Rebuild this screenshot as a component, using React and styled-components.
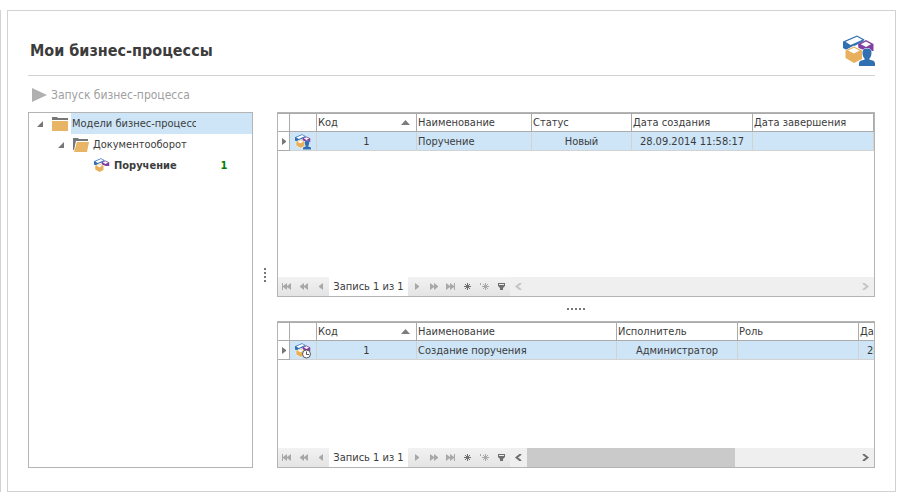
import { useState } from "react";
import styled, { createGlobalStyle } from "styled-components";

const GlobalStyle = createGlobalStyle`
  * {
    box-sizing: border-box;
  }
  body {
    margin: 0;
    background-color: #fff;
    color: #3c3c3c;
    font-family: "DejaVu Sans Condensed", "DejaVu Sans", sans-serif;
    font-size: 11px;
    line-height: 17px;
  }
  button {
    margin: 0;
    padding: 0;
    border: none;
    background: none;
    color: inherit;
    font: inherit;
    cursor: pointer;
  }
  svg {
    display: block;
  }
`;

const StyledPage = styled.div`
  display: flex;
  gap: 6px;
  min-height: 100vh;
  padding: 10px 10px 10px 0;
`;

const StyledEdge = styled.div`
  width: 1px;
  background-color: #d2d2d2;
`;

const StyledPanel = styled.main`
  display: flex;
  flex: 1;
  flex-direction: column;
  min-width: 0;
  padding: 0 20px 23px;
  border: 1px solid #d2d2d2;
`;

const StyledHeader = styled.header`
  display: flex;
  justify-content: space-between;
  align-items: center;
  height: 65px;
  padding-top: 16px;
  border-bottom: 1px solid #d2d2d2;
`;

const StyledTitle = styled.h1`
  margin: 0;
  padding-left: 2px;
  font-size: 16px;
  line-height: 24px;
`;

const StyledToolbar = styled.div`
  display: flex;
  align-items: center;
  height: 36px;
  padding: 2px 0 0 4px;
`;

const StyledStartButton = styled.button`
  display: flex;
  align-items: center;
  gap: 4px;
  font-size: 12px;
  &:disabled {
    color: #a0a0a0;
    cursor: default;
  }
`;

const StyledContent = styled.div`
  display: flex;
  flex: 1;
`;

const StyledTree = styled.ul`
  width: 225px;
  margin: 0;
  padding: 0;
  border: 1px solid #b4b4b4;
  list-style: none;
`;

const StyledTreeRow = styled.li`
  display: flex;
  align-items: center;
  height: 21px;
  padding-left: ${({ $level }) => 8 + $level * 21}px;
  font-weight: ${({ $isBold }) => ($isBold ? "bold" : "normal")};
`;

const StyledExpander = styled.button`
  width: 6px;
  height: 6px;
  margin-right: 9px;
`;

const StyledExpanderSpace = styled.span`
  width: 6px;
  margin-right: 9px;
`;

const StyledTreeLabel = styled.span`
  flex: 1;
  min-width: 0;
  height: 100%;
  margin-left: 3px;
  padding-left: 1px;
  overflow: hidden;
  line-height: 21px;
  white-space: nowrap;
  background-color: ${({ $isSelected }) =>
    $isSelected ? "#cde5f7" : "transparent"};
`;

const StyledTreeCount = styled.span`
  width: 56px;
  height: 100%;
  color: #008000;
  line-height: 21px;
  text-align: center;
  background-color: ${({ $isSelected }) =>
    $isSelected ? "#cde5f7" : "transparent"};
`;

const StyledSplitter = styled.div`
  display: flex;
  flex: 0 0 24px;
  flex-direction: ${({ $isVertical }) => ($isVertical ? "column" : "row")};
  justify-content: center;
  align-items: center;
  gap: 2px;
  padding-bottom: ${({ $isVertical }) => ($isVertical ? "30px" : "0")};
`;

const StyledDot = styled.i`
  width: 2px;
  height: 2px;
  background-color: #777;
`;

const StyledGrids = styled.div`
  display: flex;
  flex: 1;
  flex-direction: column;
  min-width: 0;
`;

const StyledGrid = styled.section`
  display: flex;
  flex: ${({ $height }) => ($height ? `0 0 ${$height}px` : "1")};
  flex-direction: column;
  border: 1px solid #b4b4b4;
`;

const StyledTableArea = styled.div`
  flex: 1;
  min-height: 0;
  overflow: hidden;
`;

const StyledTable = styled.table`
  width: 100%;
  min-width: ${({ $minWidth }) => $minWidth}px;
  border-spacing: 0;
  table-layout: fixed;
`;

const StyledTh = styled.th`
  width: ${({ $width }) => ($width ? `${$width}px` : "auto")};
  height: 19px;
  padding: 0 6px 0 1px;
  border: solid #ababab;
  border-width: 1px 1px 1px 0;
  font-weight: normal;
  text-align: left;
  white-space: nowrap;
`;

const StyledThContent = styled.div`
  display: flex;
  justify-content: space-between;
  align-items: center;
`;

const StyledTd = styled.td`
  height: 19px;
  padding: 0 1px;
  overflow: hidden;
  border: solid #d2d2d2;
  border-width: 0 1px 1px 0;
  background-color: #cde5f7;
  text-align: ${({ $align }) => $align || "left"};
  white-space: nowrap;
`;

const StyledMarkerTd = styled(StyledTd)`
  padding: 0 0 0 4px;
  border-color: #ababab;
  background-color: #fff;
`;

const StyledIconTd = styled(StyledTd)`
  padding: 1px 0 0 5px;
`;

const StyledFooter = styled.footer`
  display: flex;
  height: 19px;
`;

const StyledNavButton = styled.button`
  display: flex;
  flex: 0 0 17px;
  justify-content: center;
  align-items: center;
  background: linear-gradient(#f2f2f2, #e4e4e4);
  color: #6e6e6e;
  &:disabled {
    color: #a8a8a8;
    cursor: default;
  }
`;

const StyledRecord = styled.span`
  flex: 0 0 79px;
  padding-top: 1px;
  text-align: center;
  white-space: nowrap;
`;

const StyledScrollBar = styled.div`
  display: flex;
  flex: 1;
  background-color: #efefef;
`;

const StyledScrollButton = styled.button`
  display: flex;
  flex: 0 0 17px;
  justify-content: center;
  align-items: center;
  color: #6e6e6e;
  &:disabled {
    color: #c4c4c4;
    cursor: default;
  }
`;

const StyledScrollTrack = styled.div`
  flex: 1;
`;

const StyledScrollThumb = styled.div`
  width: ${({ $size }) => $size}%;
  height: 100%;
  background-color: #cacaca;
`;

const Boxes = () => (
  <>
    <path d="M0 6.500 14 .5l7.500 4-1.500 2-4 2-9 5-2.500 2L0 13Z" fill="#2f6fb2" />
    <path d="m2.500 6.800 11.500-5L19.500 4.700 7.500 10Z" fill="#fff" />
    <path d="m15 9 8-4 7.500 4v7h-7l-8-3Z" fill="#8040a0" />
    <path d="m17.800 9.200 5.200-2.700L28 9.200l-5 2.900Z" fill="#fff" />
    <path d="m2.500 15.500 8.500-4.500 8 4.500V24l-8 4.500-8.500-5Z" fill="#fff" stroke="#fff" />
    <path d="m2.500 15.500 8.500-4 8 4V24l-8 4-8.500-5Z" fill="#e8b05c" />
    <path d="m5 15.500 6-2.800 5.500 2.800-5.500 3Z" fill="#fff" />
  </>
);

const ProcessIcon = ({ size = 16, badge }) => (
  <svg width={size} height={size} viewBox="0 0 32 32" aria-hidden="true">
    <Boxes />
    {badge === "user" && (
      <path
        d="M24 13.500c-3 0-4.500 1.300-4.500 4 0 3 .8 4.800 2 5.800v1.500c-3 .5-5.500 1-5.500 4V31h16v-2.200c0-3-2.500-3.500-5.500-4v-1.500c1.200-1 2-2.800 2-5.800 0-2.700-1.500-4-4.500-4Z"
        fill="#2f6fb2"
        stroke="#fff"
        strokeWidth="1"
        paintOrder="stroke"
      />
    )}
    {badge === "clock" && (
      <>
        <circle cx="23" cy="22" r="8" fill="#fff" stroke="#555" strokeWidth="2" />
        <path d="M23 17v6h5" fill="none" stroke="#555" strokeWidth="2" />
      </>
    )}
  </svg>
);

const FolderIcon = ({ isOpen }) => (
  <svg width="16" height="16" viewBox="0 0 16 16" aria-hidden="true">
    {isOpen ? (
      <>
        <path d="M0 1h5l1 1h9v2H3L1 13H0Z" fill="#777" />
        <path d="M4 5h12l-2 10H1Z" fill="#e8b566" />
      </>
    ) : (
      <>
        <path d="M0 1h5l1 1h10v2H0Z" fill="#777" />
        <path d="M0 5h16v10H0Z" fill="#e8b566" />
      </>
    )}
  </svg>
);

const glyphs = {
  first: "M0 0h1v7H0ZM5 0v7L1 4V3ZM9 0v7L5 4V3Z",
  fastBack: "M4 0v7L0 4V3ZM8 0v7L4 4V3Z",
  back: "M4 0v7L0 4V3Z",
  next: "M0 0v7l4-3V3Z",
  fastNext: "M0 0v7l4-3V3ZM4 0v7l4-3V3Z",
  last: "M0 0v7l4-3V3ZM4 0v7l4-3V3ZM8 0h1v7H8Z",
  filter: "M0 0h7v3L5 5v2H2V5L0 3ZM1 1v1h5V1Z",
};

const widths = { first: 9, fastBack: 8, back: 4, next: 4, fastNext: 8, last: 9, filter: 7 };

const NavGlyph = ({ name }) => {
  if (name === "add" || name === "addCopy") {
    const shift = name === "addCopy" ? 2 : 0;
    return (
      <svg width={7 + shift} height="7" viewBox={`0 0 ${7 + shift} 7`}>
        <path
          d={`M${shift} 3.5h7M${shift + 3.5} 0v7M${shift + 1} 1l5 5M${shift + 6} 1l-5 5`}
          stroke="currentColor"
        />
        {shift > 0 && <path d="M0 0h1v2H0Z" fill="currentColor" />}
      </svg>
    );
  }
  return (
    <svg width={widths[name]} height="7" viewBox={`0 0 ${widths[name]} 7`}>
      <path d={glyphs[name]} fill="currentColor" fillRule="evenodd" />
    </svg>
  );
};

const navBefore = [
  { name: "first", label: "Первая запись" },
  { name: "fastBack", label: "Предыдущая страница" },
  { name: "back", label: "Предыдущая запись" },
];

const navAfter = [
  { name: "next", label: "Следующая запись" },
  { name: "fastNext", label: "Следующая страница" },
  { name: "last", label: "Последняя запись" },
  { name: "add", label: "Добавить", isEnabled: true },
  { name: "addCopy", label: "Добавить копию" },
  { name: "filter", label: "Фильтр", isEnabled: true },
];

const NavButtons = ({ items }) =>
  items.map(({ name, label, isEnabled }) => (
    <StyledNavButton
      key={name}
      type="button"
      aria-label={label}
      disabled={!isEnabled}
    >
      <NavGlyph name={name} />
    </StyledNavButton>
  ));

const DataGrid = ({ label, columns, row, badge, height, minWidth, thumb }) => (
  <StyledGrid $height={height} aria-label={label}>
    <StyledTableArea>
      <StyledTable $minWidth={minWidth}>
        <thead>
          <tr>
            <StyledTh $width={12} />
            <StyledTh $width={27} />
            {columns.map(({ title, width, isSorted }) => (
              <StyledTh
                key={title}
                $width={width}
                aria-sort={isSorted ? "ascending" : undefined}
              >
                <StyledThContent>
                  {title}
                  {isSorted && (
                    <svg width="9" height="5" viewBox="0 0 9 5">
                      <path d="M4.5 0 9 5H0Z" fill="#7d7d7d" />
                    </svg>
                  )}
                </StyledThContent>
              </StyledTh>
            ))}
          </tr>
        </thead>
        <tbody>
          <tr>
            <StyledMarkerTd>
              <svg width="4" height="7" viewBox="0 0 4 7">
                <path d="M0 0v7l4-3V3Z" fill="#777" />
              </svg>
            </StyledMarkerTd>
            <StyledIconTd>
              <ProcessIcon badge={badge} />
            </StyledIconTd>
            {columns.map(({ title, align }, i) => (
              <StyledTd key={title} $align={align}>
                {row[i]}
              </StyledTd>
            ))}
          </tr>
        </tbody>
      </StyledTable>
    </StyledTableArea>
    <StyledFooter>
      <NavButtons items={navBefore} />
      <StyledRecord>Запись 1 из 1</StyledRecord>
      <NavButtons items={navAfter} />
      <StyledScrollBar>
        <StyledScrollButton type="button" aria-label="Влево" disabled={!thumb}>
          <svg width="7" height="7" viewBox="0 0 7 7">
            <path d="M6 0 1.5 3.5 6 7" fill="none" stroke="currentColor" strokeWidth="2" />
          </svg>
        </StyledScrollButton>
        <StyledScrollTrack>
          {thumb && <StyledScrollThumb $size={thumb} />}
        </StyledScrollTrack>
        <StyledScrollButton type="button" aria-label="Вправо" disabled={!thumb}>
          <svg width="7" height="7" viewBox="0 0 7 7">
            <path d="m1 0 4.500 3.500L1 7" fill="none" stroke="currentColor" strokeWidth="2" />
          </svg>
        </StyledScrollButton>
      </StyledScrollBar>
    </StyledFooter>
  </StyledGrid>
);

const Splitter = ({ isVertical, dots }) => (
  <StyledSplitter $isVertical={isVertical}>
    {Array.from({ length: dots }).map((_, i) => (
      <StyledDot key={i} />
    ))}
  </StyledSplitter>
);

const treeItems = [
  { id: "models", title: "Модели бизнес-процессов", level: 0, icon: <FolderIcon /> },
  { id: "docs", title: "Документооборот", level: 1, icon: <FolderIcon isOpen /> },
  { id: "task", title: "Поручение", level: 2, icon: <ProcessIcon />, count: 1 },
];

const processColumns = [
  { title: "Код", width: 100, align: "center", isSorted: true },
  { title: "Наименование", width: 115 },
  { title: "Статус", width: 100, align: "center" },
  { title: "Дата создания", width: 121, align: "center" },
  { title: "Дата завершения", align: "center" },
];

const stepColumns = [
  { title: "Код", width: 100, align: "center", isSorted: true },
  { title: "Наименование", width: 200 },
  { title: "Исполнитель", width: 121, align: "center" },
  { title: "Роль", width: 121 },
  { title: "Дата создания", align: "center" },
];

const App = () => {
  const [selected, setSelected] = useState("models");
  const [openLevel, setOpenLevel] = useState(2);

  const toggleHandler = (level) => {
    setOpenLevel(openLevel > level ? level : 2);
  };

  return (
    <StyledPage>
      <GlobalStyle />
      <StyledEdge />
      <StyledPanel>
        <StyledHeader>
          <StyledTitle>Мои бизнес-процессы</StyledTitle>
          <ProcessIcon size={32} badge="user" />
        </StyledHeader>
        <StyledToolbar>
          <StyledStartButton type="button" disabled>
            <svg width="15" height="14" viewBox="0 0 15 14">
              <path d="M0 0v14l15-7Z" fill="#b0b0b0" />
            </svg>
            Запуск бизнес-процесса
          </StyledStartButton>
        </StyledToolbar>
        <StyledContent>
          <StyledTree>
            {treeItems
              .filter(({ level }) => level <= openLevel)
              .map(({ id, title, level, icon, count }) => (
                <StyledTreeRow
                  key={id}
                  $level={level}
                  $isBold={Boolean(count)}
                  onClick={() => setSelected(id)}
                >
                  {count ? (
                    <StyledExpanderSpace />
                  ) : (
                    <StyledExpander
                      type="button"
                      aria-label={title}
                      aria-expanded={openLevel > level}
                      onClick={() => toggleHandler(level)}
                    >
                      <svg width="6" height="6" viewBox="0 0 6 6">
                        <path d="M6 0v6H0Z" fill="#777" />
                      </svg>
                    </StyledExpander>
                  )}
                  {icon}
                  <StyledTreeLabel $isSelected={selected === id}>
                    {title}
                  </StyledTreeLabel>
                  <StyledTreeCount $isSelected={selected === id}>
                    {count}
                  </StyledTreeCount>
                </StyledTreeRow>
              ))}
          </StyledTree>
          <Splitter isVertical dots={4} />
          <StyledGrids>
            <DataGrid
              label="Бизнес-процессы"
              columns={processColumns}
              row={["1", "Поручение", "Новый", "28.09.2014 11:58:17", ""]}
              badge="user"
              minWidth={596}
            />
            <Splitter dots={5} />
            <DataGrid
              label="Этапы"
              columns={stepColumns}
              row={["1", "Создание поручения", "Администратор", "", "28.09.2014 11:58:17"]}
              badge="clock"
              height={147}
              minWidth={702}
              thumb={63}
            />
          </StyledGrids>
        </StyledContent>
      </StyledPanel>
    </StyledPage>
  );
};

export default App;
